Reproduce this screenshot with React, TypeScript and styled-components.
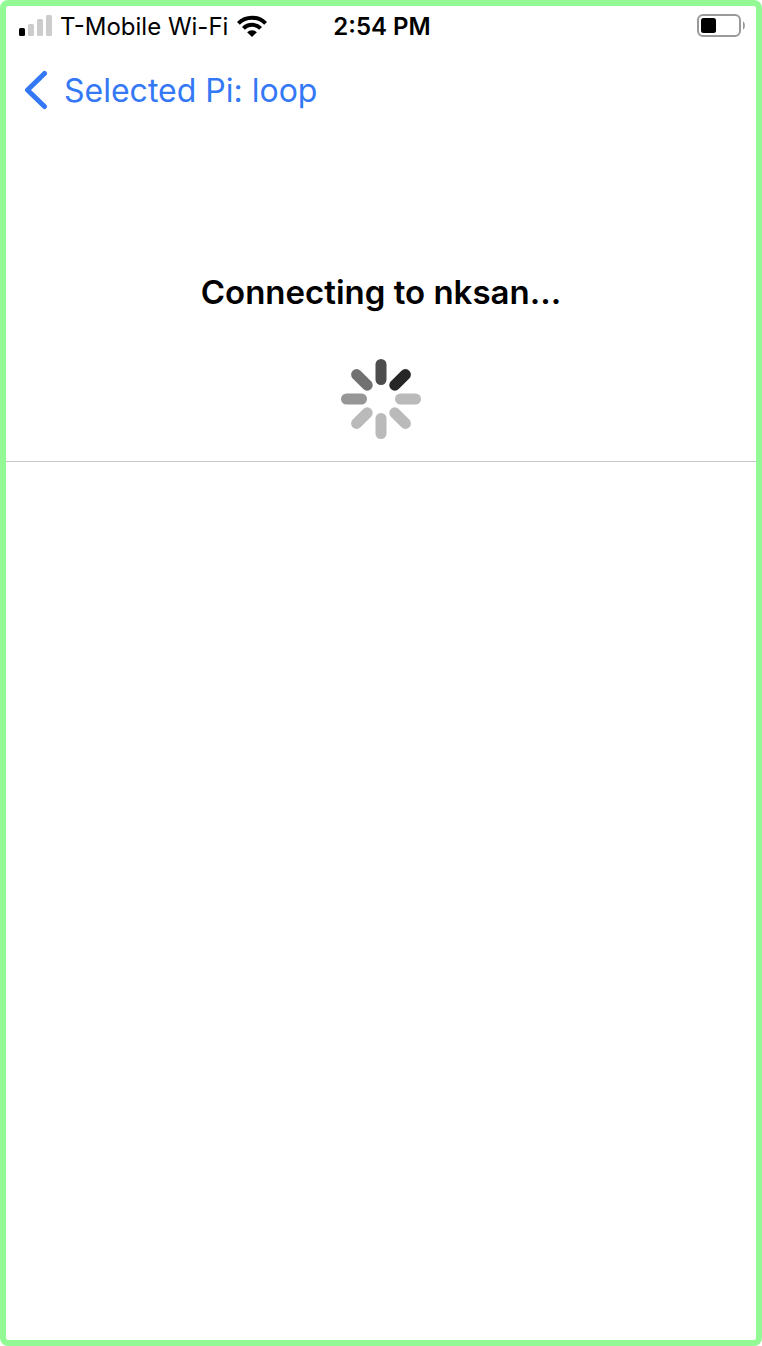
import React from 'react';
import styled, { createGlobalStyle } from 'styled-components';

const GlobalStyle = createGlobalStyle`
  *, *::before, *::after { box-sizing: border-box; }
  body {
    margin: 0;
    background: #fff;
    color: #000;
    font-family: Inter, "Liberation Sans", sans-serif;
  }
`;

const Screen = styled.div`
  display: flex;
  flex-direction: column;
  min-height: 100vh;
  border: 6px solid #93f994;
  border-radius: 8px;
`;

const StatusBar = styled.header`
  display: grid;
  grid-template-columns: 1fr auto 1fr;
  align-items: center;
  height: 42px;
  padding: 0 11px 0 13px;
  font-size: 24px;
  line-height: 30px;
`;

const Carrier = styled.div`
  display: flex;
  align-items: center;
  gap: 8px;
  white-space: nowrap;
`;

const Clock = styled.time`
  font-weight: 600;
`;

const BatterySlot = styled.div`
  display: flex;
  justify-content: flex-end;
`;

const NavBar = styled.nav`
  display: flex;
  align-items: center;
  height: 86px;
  padding: 0 18px;
`;

const BackButton = styled.button`
  display: flex;
  align-items: center;
  gap: 16px;
  padding: 0;
  border: 0;
  background: none;
  color: #3478f6;
  font: inherit;
  font-size: 32px;
  line-height: 44px;
  cursor: pointer;
`;

const Connection = styled.main`
  display: flex;
  flex-direction: column;
  align-items: center;
  gap: 45px;
  padding: 136px 16px 22px;
  border-bottom: 1px solid #c6c6c8;
`;

const Title = styled.h1`
  margin: 0;
  font-size: 33px;
  font-weight: 600;
  line-height: 44px;
  text-align: center;
`;

const SignalIcon = () => (
  <svg width="33" height="24" viewBox="0 0 33 24" role="img" aria-label="Signal: one bar">
    <rect x="0" y="13" width="6" height="8" rx="1.5" fill="#000" />
    <rect x="9" y="9" width="6" height="12" rx="1.5" fill="#ccc" />
    <rect x="18" y="4" width="6" height="17" rx="1.5" fill="#ccc" />
    <rect x="27" y="0" width="6" height="21" rx="1.5" fill="#ccc" />
  </svg>
);

const WifiIcon = () => (
  <svg width="31" height="24" viewBox="-1 0 31 24" role="img" aria-label="Wi-Fi">
    <g fill="none" stroke="#000" strokeWidth="4">
      <path d="M1.4 8.4A19.2 19.2 0 0 1 28.6 8.4" />
      <path d="M6.4 13.4A12.1 12.1 0 0 1 23.6 13.4" />
    </g>
    <path d="M15 22L10.1 17.2A7 7 0 0 1 19.9 17.2Z" fill="#000" />
  </svg>
);

const BatteryIcon = () => (
  <svg width="48" height="26" viewBox="0 0 48 26" role="img" aria-label="Battery: one third">
    <rect x="1" y="1" width="42" height="21" rx="5" fill="#fff" stroke="#999" strokeWidth="2" />
    <rect x="4" y="4" width="15" height="15" rx="2.5" fill="#000" />
    <path d="M46 7.5C48.5 8.5 48.5 14.5 46 15.5Z" fill="#999" />
  </svg>
);

const ChevronIcon = () => (
  <svg width="24" height="42" viewBox="0 0 24 42" aria-hidden="true">
    <path
      d="M20.5 3.5L3.5 20L20.5 36.5"
      fill="none"
      stroke="currentColor"
      strokeWidth="5"
      strokeLinecap="round"
      strokeLinejoin="round"
    />
  </svg>
);

const spokeColors = ['#4d4d4d', '#262626', '#bababa', '#bababa', '#bababa', '#bababa', '#969696', '#717171'];

const Spinner = () => (
  <svg width="80" height="80" viewBox="0 0 80 80" role="img" aria-label="Connecting">
    {spokeColors.map((color, i) => (
      <rect key={i} x="34.5" y="0" width="11" height="26" rx="5.5" fill={color} transform={`rotate(${i * 45} 40 40)`} />
    ))}
  </svg>
);

export default function App() {
  return (
    <Screen>
      <GlobalStyle />
      <StatusBar>
        <Carrier>
          <SignalIcon />
          <span>T-Mobile Wi-Fi</span>
          <WifiIcon />
        </Carrier>
        <Clock dateTime="14:54">2:54 PM</Clock>
        <BatterySlot>
          <BatteryIcon />
        </BatterySlot>
      </StatusBar>
      <NavBar>
        <BackButton type="button">
          <ChevronIcon />
          Selected Pi: loop
        </BackButton>
      </NavBar>
      <Connection>
        <Title>Connecting to nksan...</Title>
        <Spinner />
      </Connection>
    </Screen>
  );
}
